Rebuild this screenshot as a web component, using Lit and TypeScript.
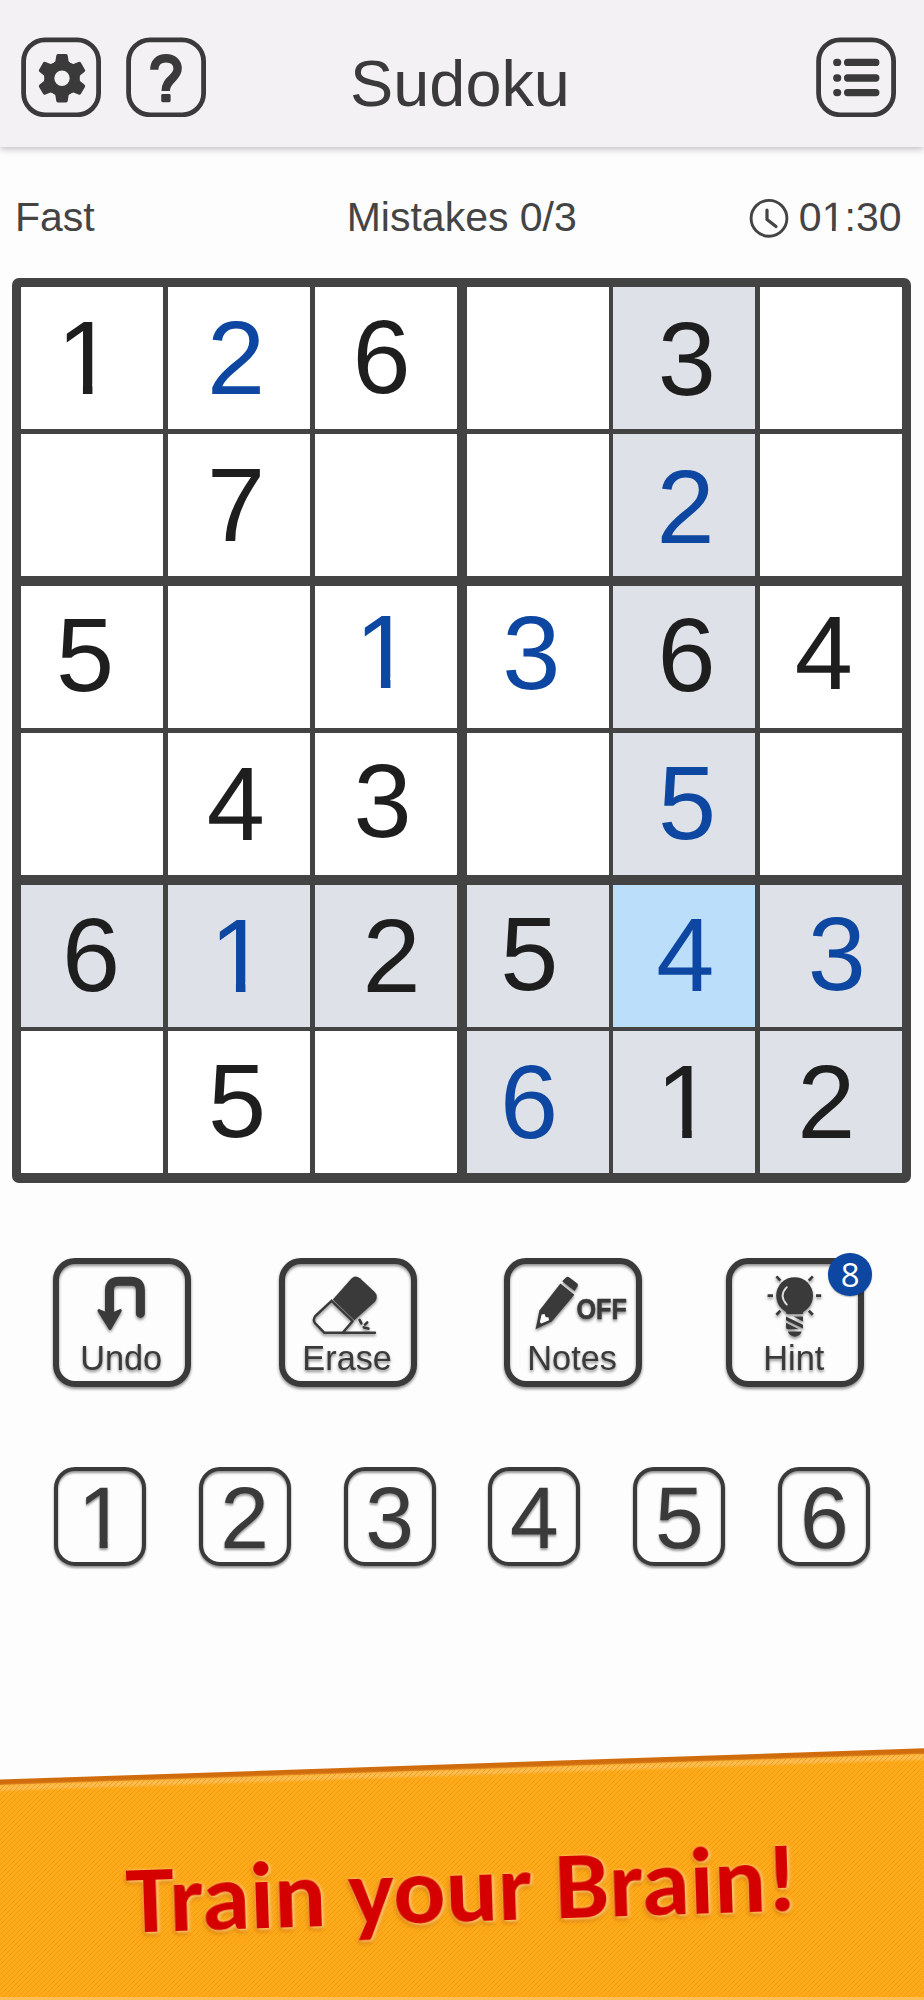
import { LitElement, html, svg, css, nothing } from "lit";
import { customElement, property } from "lit/decorators.js";
import { classMap } from "lit/directives/class-map.js";
import { styleMap } from "lit/directives/style-map.js";

type Kind = "given" | "entered";
interface Cell {
  value: number;
  kind: Kind;
  /** hand-set offset of the digit from the centre of its cell */
  dx: number;
  dy: number;
}

const g = (value: number, dx: number, dy: number): Cell => ({ value, kind: "given", dx, dy });
const e = (value: number, dx: number, dy: number): Cell => ({ value, kind: "entered", dx, dy });
const _ = null;

const BOARD: (Cell | null)[][] = [
  [g(1, -6.5, -0.4), e(2, -3, -0.3), g(6, -3.9, -0.8), _, g(3, 2.7, 1), _],
  [_, g(7, -3, -0.4), _, _, e(2, 1.5, 2), _],
  [g(5, -7.3, -2), _, e(1, -1.7, -5.5), e(3, -6.3, -4.2), g(6, 2.5, -1.8), g(4, -7, -4.1)],
  [_, g(4, -3.2, 0.6), g(3, -3, -1.8), _, e(5, 2.8, 0.2), _],
  [g(6, -1.2, -1.2), e(1, -0.1, -0.2), g(2, 6.1, -0.2), g(5, -8.2, -2.2), e(4, 1.2, -1.5), e(3, 6.1, -1.7)],
  [_, g(5, -2, -1.1), _, e(6, -8.4, -0.1), g(1, 1, 0), g(2, -4.4, 0.1)],
];
const SELECTED = { row: 4, col: 4 };

const digitStyles = css`
  .digit {
    display: inline-block;
    line-height: 1em;
    text-rendering: geometricPrecision;
  }
  /* The numeral one is shown without its foot. */
  .one {
    clip-path: polygon(0 0, 100% 0, 100% 0.745em, 0.341em 0.745em, 0.341em 100%, 0.25em 100%, 0.25em 0.745em, 0 0.745em);
  }
`;

const digit = (d: string | number) =>
  html`<span class=${classMap({ digit: true, one: String(d) === "1" })}>${d}</span>`;

@customElement("sudoku-header")
class SudokuHeader extends LitElement {
  static styles = css`
    :host {
      display: grid;
      grid-template-columns: 1fr auto 1fr;
      height: 147px;
      box-sizing: border-box;
      padding: 37px 28px 0 21px;
      background: #f3f1f3;
      box-shadow: 0 2px 7px rgba(0, 0, 0, 0.26);
      color: #3a3a3a;
    }
    .left {
      display: flex;
      gap: 25px;
    }
    .right {
      display: flex;
      justify-content: flex-end;
    }
    svg {
      display: block;
      width: 80px;
      height: 80px;
    }
    .frame {
      fill: none;
      stroke: #3a3a3a;
      stroke-width: 4.8;
    }
    .solid {
      fill: #3a3a3a;
    }
    .line {
      fill: none;
      stroke: #3a3a3a;
    }
    .title {
      font-size: 64.8px;
      font-weight: 400;
      line-height: 72px;
      margin: 11px 0 0;
      padding-left: 3px;
    }
  `;
  private frame = svg`<rect class="frame" x="2.6" y="2.8" width="75" height="75" rx="21.5" />`;
  render() {
    return html`
      <div class="left">
        <svg viewBox="0 0 80 80">
          ${this.frame}
          <g transform="translate(41 41.3)">
            <path
              class="solid"
              fill-rule="evenodd"
              d="M0 -17.3A17.3 17.3 0 1 1 0 17.3A17.3 17.3 0 1 1 0 -17.3ZM0 -7.7A7.7 7.7 0 1 0 0 7.7A7.7 7.7 0 1 0 0 -7.7Z"
            />
            ${[0, 60, 120, 180, 240, 300].map(
              (a) => svg`<path class="solid" transform=${`rotate(${a})`} d="M-5.8 -22.4Q-5.6 -24.2 -4 -24.2H4Q5.6 -24.2 5.8 -22.4L6.6 -17L10 -14L4 -11H-4L-10 -14L-6.6 -17Z" />`,
            )}
          </g>
        </svg>
        <svg viewBox="0 0 80 80">
          ${this.frame}
          <path class="line" stroke-width="8.4" d="M28.3 32.7C28.3 25.4 33 21.2 40 21.2C47.2 21.2 51.6 25.4 51.6 31.6C51.6 41.5 39.7 42 39.7 54" />
          <rect class="solid" x="35.2" y="57" width="9.4" height="8.2" rx="1.4" />
        </svg>
      </div>
      <h1 class="title">Sudoku</h1>
      <div class="right">
        <svg viewBox="0 0 80 80">
          ${this.frame}
          ${[25.4, 41, 55.6].map(
            (y) => svg`
              <path class="line" stroke-width="7.3" stroke-linecap="round" d=${`M20.8 ${y}h.8M31.6 ${y}h28.2`} />`,
          )}
        </svg>
      </div>
    `;
  }
}

@customElement("sudoku-status")
class SudokuStatus extends LitElement {
  static styles = [
    digitStyles,
    css`
      :host {
        display: grid;
        grid-template-columns: 1fr auto 1fr;
        align-items: start;
        box-sizing: border-box;
        height: 130px;
        padding: 46px 22.5px 0 15px;
        font-size: 41px;
        line-height: 48px;
        color: #444;
      }
      .mid {
        padding-left: 7px;
      }
      .clock {
        display: flex;
        justify-content: flex-end;
        gap: 10px;
      }
      svg {
        width: 40px;
        height: 40px;
        margin-top: 5px;
        fill: none;
        stroke: #444;
      }
    `,
  ];
  render() {
    return html`
      <span>Fast</span>
      <span class="mid">Mistakes 0/3</span>
      <span class="clock">
        <svg viewBox="0 0 40 40">
          <circle cx="20" cy="20.3" r="17.9" stroke-width="2.9" />
          <path d="M18 12V21.5L27 28.5" stroke-width="3.2" stroke-linecap="round" stroke-linejoin="round" />
        </svg>
        <span>${[..."01:30"].map((c) => (c === "1" ? digit(c) : c))}</span>
      </span>
    `;
  }
}

@customElement("sudoku-board")
class SudokuBoard extends LitElement {
  static styles = [
    digitStyles,
    css`
      :host {
        display: grid;
        grid-template-columns: repeat(2, 435.2px);
        gap: 10.2px 10px;
        width: max-content;
        margin-left: 12.2px;
        margin-top: 0.6px;
        padding: 9.6px 9.2px 9.4px;
        border-radius: 7px;
        background: #434343;
      }
      .block {
        display: grid;
        grid-template-columns: repeat(3, 142px);
        grid-auto-rows: 142px;
        gap: 4.6px;
      }
      .cell {
        display: flex;
        align-items: center;
        justify-content: center;
        box-sizing: border-box;
        padding-top: 2px;
        background: #fff;
        color: #1e1e1e;
        font-size: 104.5px;
      }
      .related {
        background: #dee1e7;
      }
      .selected {
        background: #bbdefb;
      }
      .entered {
        color: #0d47a1;
      }
    `,
  ];
  private cell(row: number, col: number) {
    const c = BOARD[row][col];
    const selected = row === SELECTED.row && col === SELECTED.col;
    const sameBlock = row >> 1 === SELECTED.row >> 1 && Math.floor(col / 3) === Math.floor(SELECTED.col / 3);
    const related = row === SELECTED.row || col === SELECTED.col || sameBlock;
    return html`<div class=${classMap({ cell: true, related: related && !selected, selected, entered: c?.kind === "entered" })}>
      ${c ? html`<span style=${styleMap({ display: "flex", transform: `translate(${c.dx}px, ${c.dy}px)` })}>${digit(c.value)}</span>` : nothing}
    </div>`;
  }
  render() {
    return [0, 2, 4].flatMap((r) =>
      [0, 3].map(
        (c) => html`<div class="block">
          ${[0, 1].map((i) => [0, 1, 2].map((j) => this.cell(r + i, c + j)))}
        </div>`,
      ),
    );
  }
}

const ICONS: Record<string, unknown> = {
  Undo: svg`
    <path class="stroke" stroke-width="9" d="M50.5 46V25.5Q50.5 16.2 59.8 16.2H72.2Q81.4 16.2 81.4 25.5V48.4" />
    <path class="fill" stroke="#3a3a3a" stroke-width="3" stroke-linejoin="round" d="M40 45.6L46.5 48.4H55L61.3 45.6L51 63.4Z" />`,
  Erase: svg`
    <path class="fill" d="M47.8 34.6L66.2 13.8Q70.3 9.4 75 13.3L89 26.3Q94 31 90.2 36.5L69.3 55.3Z" />
    <path class="stroke" stroke-width="2.4" d="M46.6 35.8L30.4 51Q27.6 54.6 30 58.2L39.4 67.8H90M46.6 35.8L67.6 56.2L57.6 67.8" />
    <path class="stroke" stroke-width="2.6" d="M74.6 54.8L76.4 58.4M80 59.6L82.2 57.4M78.8 62.4L83.4 63.6" />`,
  Notes: svg`
    <path class="fill" d="M25.6 64.2L29.4 45.4L50.4 18.6L64.4 29.8L41.8 56.4Z" />
    <path class="fill" stroke="#3a3a3a" stroke-width="1.5" stroke-linejoin="round" d="M53.2 16.2L56.8 12.8Q57.8 12.2 59 13L66.6 18.8Q67.8 20 66.8 21.2L64.4 25Z" />
    <path class="paper" d="M31.6 49.4L34.6 49L35.6 52L38.6 52.4L39 55.2L31.4 58.4L29.8 57.2Z" />
    <text class="off" x="66.4" y="54" textLength="50.5" lengthAdjust="spacingAndGlyphs">OFF</text>`,
  Hint: svg`
    <circle class="fill" cx="62.6" cy="30.6" r="18.4" />
    <path class="fill" d="M50 43.5Q54.4 45.5 54.4 49H70.8Q70.8 45.5 75.2 43.5Z" />
    <path class="fill" d="M54 51.6L71 59.8V63.6L54 55.2ZM61.5 51.6H71V56.6ZM54 57.8L67 64.2H56.2Q54 64.2 54 62ZM55.8 66.6H69.8Q68.4 70.8 62.8 71.8Q57.2 70.8 55.8 66.6Z" />
    <path class="stroke glint" stroke-width="1.9" d="M54.8 22.2Q46.4 30.8 54.8 39.6" />
    <path class="ray" stroke-width="2.7" d="M35.6 30.6H41M84 30.6H89.2M44.4 11.4L48.4 15.6M80.8 11.4L76.8 15.6M44.4 49.8L48.4 45.8M80.8 49.8L76.8 45.8" />`,
};

@customElement("tool-button")
class ToolButton extends LitElement {
  @property() label = "";
  @property() badge = "";
  static styles = css`
    :host {
      display: block;
      position: relative;
      width: 138.3px;
      height: 129px;
    }
    .box {
      box-sizing: border-box;
      height: 100%;
      border: 6px solid #3a3a3a;
      border-radius: 22px;
      color: #3a3a3a;
      text-align: center;
      filter: drop-shadow(0 2px 1.5px rgba(0, 0, 0, 0.45));
    }
    svg {
      display: block;
      width: 126px;
      height: 73px;
      margin-top: 0.6px;
      overflow: visible;
    }
    .fill {
      fill: #3a3a3a;
    }
    .stroke {
      fill: none;
      stroke: #3a3a3a;
      stroke-linecap: round;
      stroke-linejoin: round;
    }
    .ray {
      stroke: #3a3a3a;
    }
    .glint {
      stroke: #ddd;
    }
    .paper {
      fill: #fff;
    }
    .off {
      font: bold 29.5px "Liberation Sans", Arial, sans-serif;
      fill: #3a3a3a;
      stroke: #3a3a3a;
      stroke-width: 0.6;
    }
    .label {
      font-size: 34.3px;
      line-height: 40px;
      padding-right: 2px;
    }
    .badge {
      position: absolute;
      right: -7.8px;
      top: -5px;
      width: 43.4px;
      height: 43.4px;
      border-radius: 50%;
      background: #0d47a1;
      color: #fff;
      font: 33px/43px "Open Sans", "Noto Sans", sans-serif;
      text-align: center;
      box-shadow: 0 1px 1.5px rgba(0, 0, 0, 0.3);
    }
  `;
  render() {
    return html`
      <div class="box">
        <svg viewBox="0 0 126 73">${ICONS[this.label]}</svg>
        <div class="label">${this.label}</div>
      </div>
      ${this.badge ? html`<span class="badge">${this.badge}</span>` : nothing}
    `;
  }
}

@customElement("promo-banner")
class PromoBanner extends LitElement {
  static styles = css`
    :host {
      display: block;
    }
    svg {
      display: block;
      width: 924px;
      height: 253px;
    }
    .slogan {
      font: bold 95.5px Carlito, Lato, sans-serif;
      fill: #d50000;
      filter: drop-shadow(0 0 1.5px #ffc763) drop-shadow(2px 1px 1.5px #ffcb6b) drop-shadow(-1px 2px 1.5px rgba(190, 100, 0, 0.6));
    }
  `;
  render() {
    return html`
      <svg viewBox="0 1747 924 253">
        <defs>
          <pattern id="stripes" width="5" height="5" patternUnits="userSpaceOnUse">
            <path d="M-1 1L1 -1M0 5L5 0M4 6L6 4" stroke="#f19a12" stroke-width="0.9" />
          </pattern>
          <filter id="soft" x="-5%" y="-50%" width="110%" height="200%"><feGaussianBlur stdDeviation="0.8" /></filter>
        </defs>
        <path d="M0 1779.6L924 1748.2V2000H0Z" fill="#d06c0c" />
        <path d="M0 1785L924 1754V2000H0Z" fill="#ffaa18" />
        <path d="M0 1788L924 1757" stroke="#ffbe55" stroke-width="5.5" filter="url(#soft)" />
        <path d="M0 1785L924 1754V2000H0Z" fill="url(#stripes)" />
        <path d="M0 1998.6H924" stroke="#ffbe55" stroke-width="3" />
        <text class="slogan" x="0" y="0" textLength="672" lengthAdjust="spacingAndGlyphs" transform="translate(127 1932.6) rotate(-1.9)">Train your Brain!</text>
      </svg>
    `;
  }
}

@customElement("app-root")
class AppRoot extends LitElement {
  static styles = [
    digitStyles,
    css`
      :host {
        display: flex;
        flex-direction: column;
        width: 924px;
        height: 2000px;
        overflow: hidden;
        background: #fdfdfd;
        font-family: "Liberation Sans", Arial, sans-serif;
      }
      .tools {
        display: grid;
        grid-template-columns: 226px 225px 221.7px auto;
        margin: 75.2px 0 0 53px;
      }
      .pad {
        display: flex;
        justify-content: space-between;
        margin: 80.4px 53.6px 0 53.6px;
      }
      .key {
        display: flex;
        justify-content: center;
        box-sizing: border-box;
        width: 92px;
        height: 99px;
        padding: 4px 0 0;
        border: 4.8px solid #3a3a3a;
        border-radius: 21px;
        color: #3a3a3a;
        font-size: 87.5px;
        filter: drop-shadow(0 2.5px 1.3px rgba(0, 0, 0, 0.42));
      }
      .key-one {
        padding-left: 5px;
      }
      promo-banner {
        margin-top: auto;
      }
    `,
  ];
  render() {
    return html`
      <sudoku-header></sudoku-header>
      <sudoku-status></sudoku-status>
      <sudoku-board></sudoku-board>
      <div class="tools">
        <tool-button label="Undo"></tool-button>
        <tool-button label="Erase"></tool-button>
        <tool-button label="Notes"></tool-button>
        <tool-button label="Hint" badge="8"></tool-button>
      </div>
      <div class="pad">
        ${[1, 2, 3, 4, 5, 6].map((n) => html`<div class=${classMap({ key: true, "key-one": n === 1 })}>${digit(n)}</div>`)}
      </div>
      <promo-banner></promo-banner>
    `;
  }
}
